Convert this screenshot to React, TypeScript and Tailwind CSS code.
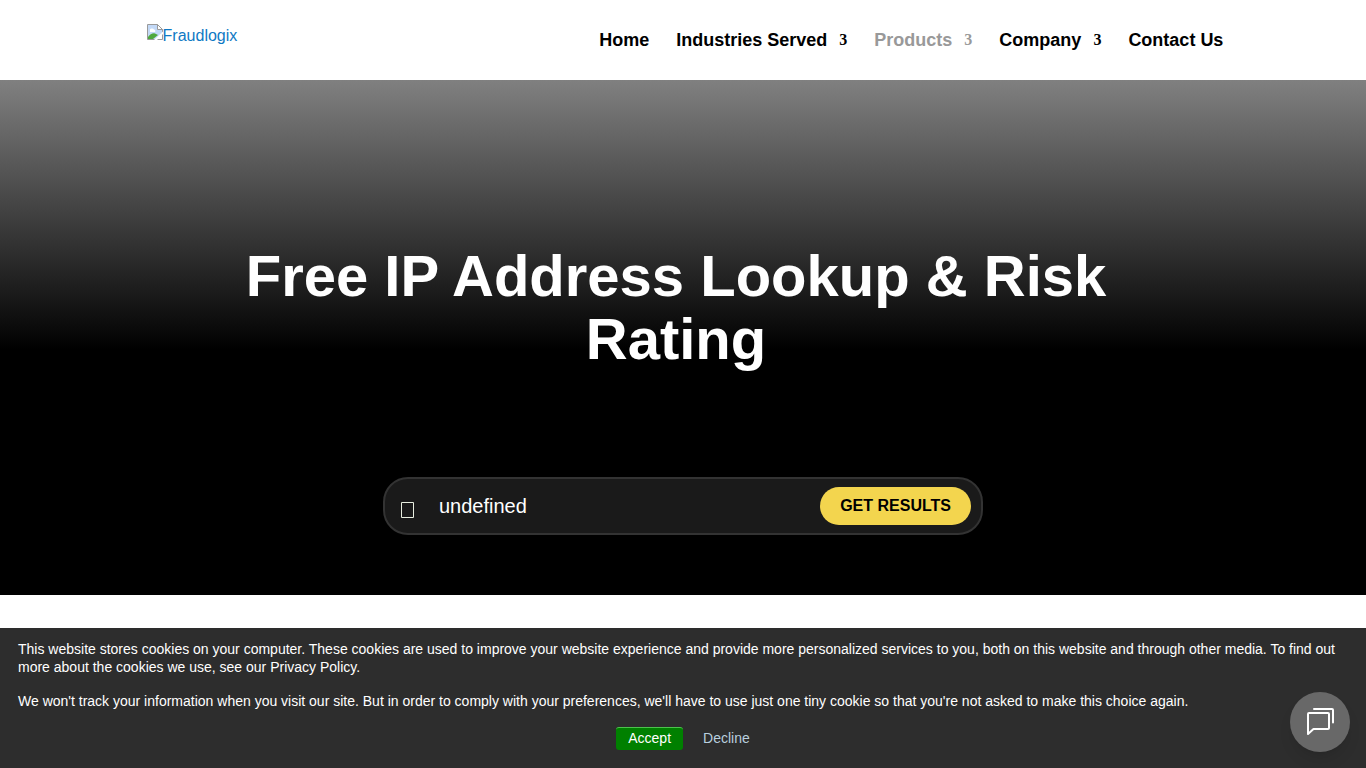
const links = [
  { label: 'Home' },
  { label: 'Industries Served', menu: true },
  { label: 'Products', menu: true, active: true },
  { label: 'Company', menu: true },
  { label: 'Contact Us' },
];

function Logo() {
  return (
    <a href="#" className="flex items-start text-base leading-6 text-[#0f79c4]">
      <svg width="16" height="16" viewBox="0 0 16 16" aria-hidden="true">
        <path d="M.5 .5h10l5 5v3l-7 7h-8z" fill="#c3d9f7" stroke="#9a9a9a" />
        <path d="M10.500 .5v5h5z" fill="#fff" stroke="#9a9a9a" />
        <path d="M3 6.500a2 1.500 0 0 1 4-1 1.500 1.500 0 0 1 1 2.500H3z" fill="#fff" />
        <path d="M1 15v-2c2-3 6-5 8-3l2 1-5 4z" fill="#4fa83d" />
        <path d="M7 16l9-8.500V16z" fill="#fff" />
        <path d="M10.500 15.500h5v-5" fill="none" stroke="#9a9a9a" />
      </svg>
      <span>Fraudlogix</span>
    </a>
  );
}

function Header() {
  return (
    <header className="h-20 bg-white">
      <div className="mx-auto flex h-full w-4/5 items-center justify-between pr-[6px] pl-[10px]">
        <div className="-mt-2">
          <Logo />
        </div>
        <nav className="flex items-center gap-[27px] text-lg font-bold">
          {links.map((l) => (
            <a key={l.label} href="#" className={l.active ? 'flex items-center gap-3 text-[#999999]' : 'flex items-center gap-3 text-black'}>
              <span>{l.label}</span>
              {l.menu && <span className="font-['Liberation_Serif',serif] text-base">3</span>}
            </a>
          ))}
        </nav>
      </div>
    </header>
  );
}

function Hero() {
  return (
    <main className="bg-linear-to-b/srgb from-[#808080] to-black to-[270px] px-4 pt-[164px] pb-[60px]">
      <h1 className="mx-auto max-w-[1000px] pr-[14px] text-center text-[58px] leading-[63px] font-bold text-white">
        Free IP Address Lookup &amp; Risk Rating
      </h1>
      <form
        onSubmit={(e) => e.preventDefault()}
        className="mx-auto mt-[107px] flex h-[58px] max-w-[600px] items-center rounded-[25px] border-2 border-[#333333] bg-[#1a1a1a] pr-[10px] pl-4"
      >
        <svg className="mt-2 shrink-0" width="13" height="16" viewBox="0 0 13 16" fill="none" stroke="#e8eee0" aria-hidden="true">
          <path d="M.5 .5h12v15H.5z" />
        </svg>
        <input
          aria-label="IP address"
          defaultValue="undefined"
          className="ml-[25px] min-w-0 flex-1 bg-transparent text-xl text-white outline-none"
        />
        <button type="submit" className="h-[38px] rounded-full bg-[#f3d54e] px-5 text-base font-bold text-black">
          GET RESULTS
        </button>
      </form>
    </main>
  );
}

function CookieBanner() {
  return (
    <section aria-label="Cookies" className="fixed inset-x-0 bottom-0 bg-[#2d2d2d] px-[18px] pt-3 pb-[18px] text-sm leading-[18px] text-white">
      <p>
        This website stores cookies on your computer. These cookies are used to improve your website experience and
        provide more personalized services to you, both on this website and through other media. To find out more about
        the cookies we use, see our Privacy Policy.
      </p>
      <p className="mt-4">
        We won't track your information when you visit our site. But in order to comply with your preferences, we'll
        have to use just one tiny cookie so that you're not asked to make this choice again.
      </p>
      <div className="mt-[17px] flex justify-center gap-2 pl-3">
        <button type="button" className="rounded-[3px] border-t border-[#4cc24c] bg-[#008000] px-3 pt-px pb-[3px]">
          Accept
        </button>
        <button type="button" className="px-3 pt-px pb-[3px] text-[#b8cfdf]">
          Decline
        </button>
      </div>
    </section>
  );
}

function ChatButton() {
  return (
    <button
      type="button"
      aria-label="Open chat"
      className="fixed right-4 bottom-4 flex size-[60px] items-center justify-center rounded-full bg-[#686868] shadow-lg"
    >
      <svg width="28" height="28" viewBox="0 0 28 28" fill="none" stroke="#fff" strokeWidth="2" strokeLinecap="round" strokeLinejoin="round" aria-hidden="true">
        <path d="M2 6a1 1 0 0 1 1-1h19a1 1 0 0 1 1 1v14a1 1 0 0 1-1 1H7.500L2 26z" />
        <path d="M8 1h18a1 1 0 0 1 1 1v12.500" />
      </svg>
    </button>
  );
}

export default function App() {
  return (
    <div className="min-h-screen bg-white font-['Liberation_Sans',Arial,sans-serif]">
      <Header />
      <Hero />
      <CookieBanner />
      <ChatButton />
    </div>
  );
}
